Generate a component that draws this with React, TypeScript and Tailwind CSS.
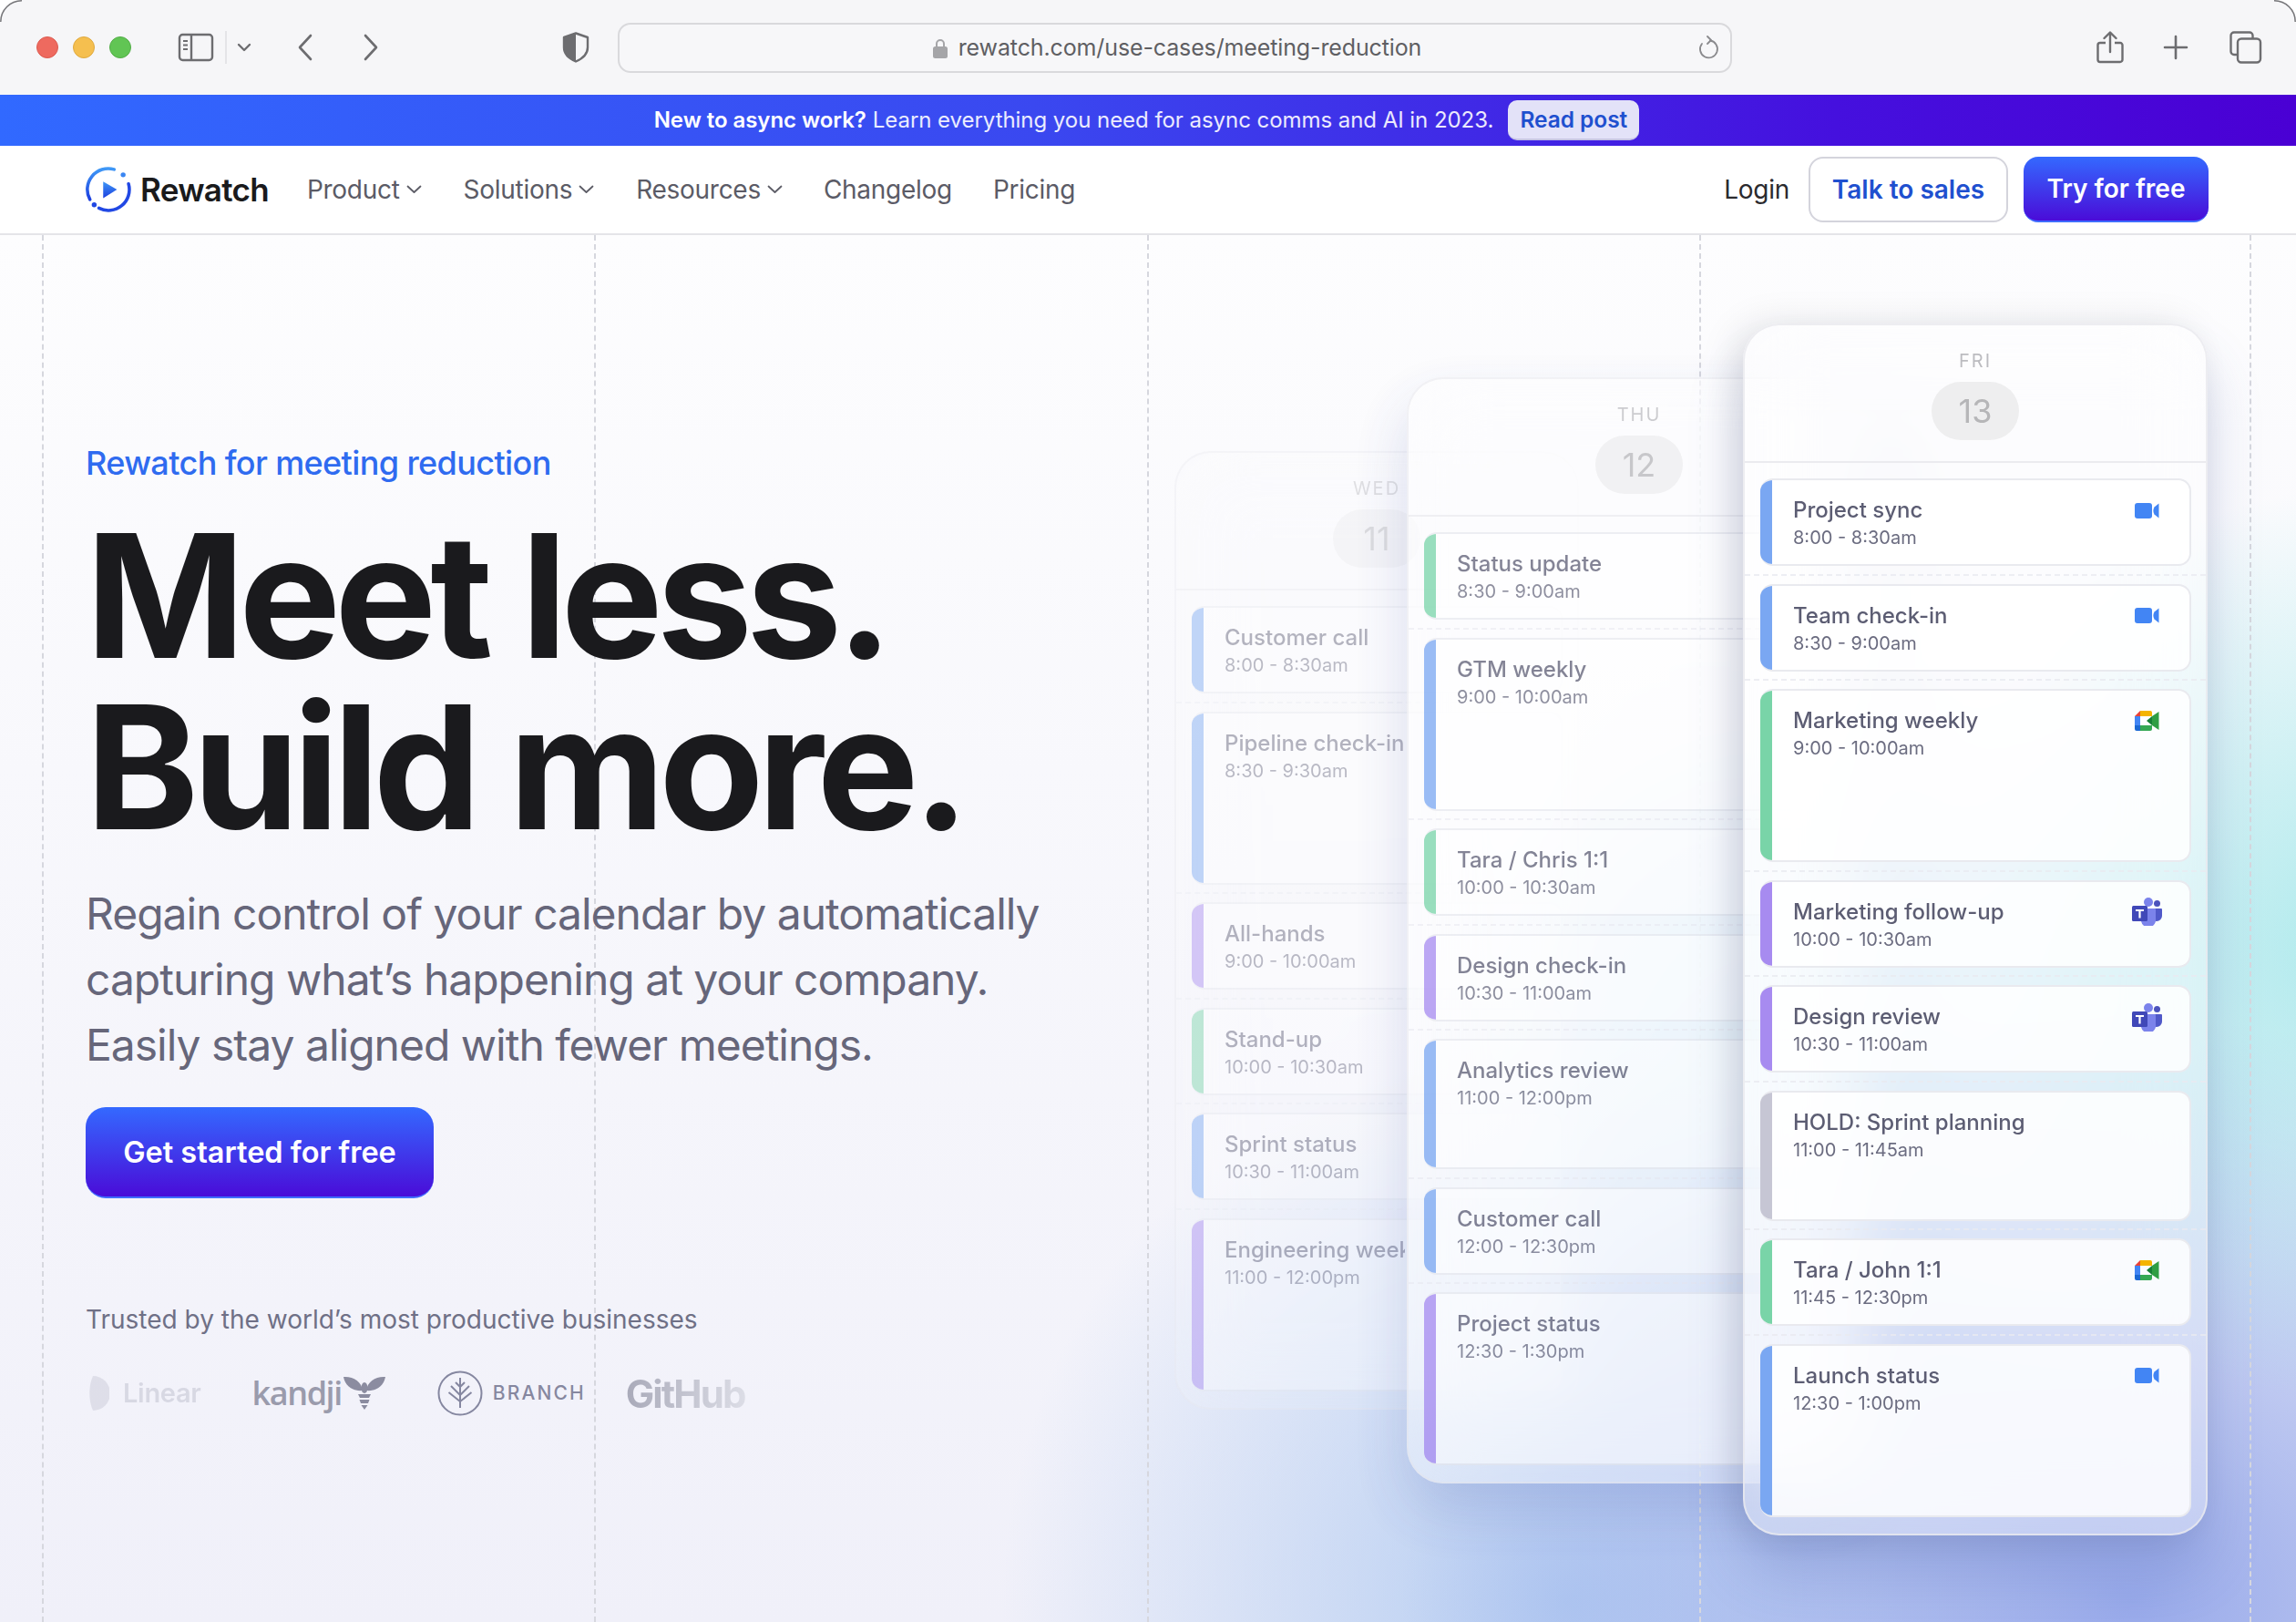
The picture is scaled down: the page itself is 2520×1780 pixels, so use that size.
import React from "react";

type Ev = { t: string; s: string; c: string; h: number; i?: "zoom" | "meet" | "teams" };

const BLUE = "bg-[#7aa7f2]";
const GREEN = "bg-[#79d4a8]";
const PURPLE = "bg-[#a78bf0]";
const GRAY = "bg-[#c6c6d4]";

const wed: Ev[] = [
  { t: "Customer call", s: "8:00 - 8:30am", c: BLUE, h: 96 },
  { t: "Pipeline check-in", s: "8:30 - 9:30am", c: BLUE, h: 190 },
  { t: "All-hands", s: "9:00 - 10:00am", c: PURPLE, h: 96 },
  { t: "Stand-up", s: "10:00 - 10:30am", c: GREEN, h: 96 },
  { t: "Sprint status", s: "10:30 - 11:00am", c: BLUE, h: 96 },
  { t: "Engineering weekly", s: "11:00 - 12:00pm", c: PURPLE, h: 190 },
];
const thu: Ev[] = [
  { t: "Status update", s: "8:30 - 9:00am", c: GREEN, h: 96 },
  { t: "GTM weekly", s: "9:00 - 10:00am", c: BLUE, h: 190 },
  { t: "Tara / Chris 1:1", s: "10:00 - 10:30am", c: GREEN, h: 96 },
  { t: "Design check-in", s: "10:30 - 11:00am", c: PURPLE, h: 96 },
  { t: "Analytics review", s: "11:00 - 12:00pm", c: BLUE, h: 143 },
  { t: "Customer call", s: "12:00 - 12:30pm", c: BLUE, h: 96 },
  { t: "Project status", s: "12:30 - 1:30pm", c: PURPLE, h: 190 },
];
const fri: Ev[] = [
  { t: "Project sync", s: "8:00 - 8:30am", c: BLUE, h: 96, i: "zoom" },
  { t: "Team check-in", s: "8:30 - 9:00am", c: BLUE, h: 96, i: "zoom" },
  { t: "Marketing weekly", s: "9:00 - 10:00am", c: GREEN, h: 190, i: "meet" },
  { t: "Marketing follow-up", s: "10:00 - 10:30am", c: PURPLE, h: 96, i: "teams" },
  { t: "Design review", s: "10:30 - 11:00am", c: PURPLE, h: 96, i: "teams" },
  { t: "HOLD: Sprint planning", s: "11:00 - 11:45am", c: GRAY, h: 143 },
  { t: "Tara / John 1:1", s: "11:45 - 12:30pm", c: GREEN, h: 96, i: "meet" },
  { t: "Launch status", s: "12:30 - 1:00pm", c: BLUE, h: 190, i: "zoom" },
];

function ZoomIcon() {
  return (
    <svg width="27" height="17" viewBox="0 0 27 17">
      <rect x="0" y="0" width="19" height="17" rx="3" fill="#4285f4" />
      <path d="M26.5 0.5V16.5L21.5 12.5C20 10 20 7 21.5 4.5Z" fill="#4285f4" />
    </svg>
  );
}

function MeetIcon() {
  return (
    <svg width="27" height="22" viewBox="0 0 27 22">
      <path d="M6 0H17A2 2 0 0 1 19 2V6H13V6H6Z" fill="#f4b400" />
      <path d="M6 0V6H0Z" fill="#ea4335" />
      <path d="M0 6H6V16H0Z" fill="#4285f4" />
      <path d="M0 16H6V22H2A2 2 0 0 1 0 20Z" fill="#1967d2" />
      <path d="M6 16H13V16H19V20A2 2 0 0 1 17 22H6Z" fill="#34a853" />
      <path d="M13 11L19 6V16Z" fill="#188038" />
      <path d="M19 6L26.5 1V21L19 16Z" fill="#2f9e44" />
    </svg>
  );
}

function TeamsIcon() {
  return (
    <svg width="33" height="31" viewBox="0 0 33 31">
      <circle cx="27.5" cy="6.5" r="3.5" fill="#4b53bc" />
      <path d="M23 12H32A1 1 0 0 1 33 13V20A6 6 0 0 1 27 26C24 26 23 25 23 25Z" fill="#5059c9" />
      <circle cx="18" cy="5" r="5" fill="#7b83eb" />
      <path d="M9 12H25A1 1 0 0 1 26 13V23A8 8 0 0 1 10 26Z" fill="#7b83eb" />
      <rect x="0" y="9" width="17" height="17" rx="1.5" fill="#4048b8" />
      <path d="M4 13H13V15H9.6V22.5H7.4V15H4Z" fill="#fff" />
    </svg>
  );
}

function Card({ e, clip }: { e: Ev; clip?: boolean }) {
  return (
    <div
      className="ml-[17px] mr-[16px] flex overflow-hidden rounded-[14px] border-2 border-l-0 border-[#e9eaef] bg-white/85"
      style={{ height: e.h }}
    >
      <div className={`w-[13px] flex-none ${e.c}`} />
      <div className="flex min-w-0 flex-1 justify-between pl-[23px] pr-[30px] pt-[17px]">
        <div className={`whitespace-nowrap ${clip ? "max-w-[198px] overflow-hidden" : ""}`}>
          <div className="text-[24px] font-medium leading-[31px] text-[#5c5d73]">{e.t}</div>
          <div className="text-[20px] leading-[30px] text-[#6b6c80]">{e.s}</div>
        </div>
        {e.i && (
          <div className="flex h-[32px] w-[33px] flex-none items-center justify-center">
            {e.i === "zoom" && <ZoomIcon />}
            {e.i === "meet" && <MeetIcon />}
            {e.i === "teams" && <TeamsIcon />}
          </div>
        )}
      </div>
    </div>
  );
}

function Panel({ day, num, ev, cls, clip }: { day: string; num: string; ev: Ev[]; cls: string; clip?: boolean }) {
  return (
    <div
      className={`flex-none overflow-hidden rounded-[40px] border-2 border-[#e8e9ee]/80 pb-[18px] backdrop-blur-[40px] ${cls}`}
    >
      <div className="flex h-[151px] flex-col items-center border-b-2 border-[#ebebef] pt-[26px]">
        <div className="text-[20px] leading-[26px] tracking-[0.1em] text-[#bcbcc0]">{day}</div>
        <div className="mt-[10px] flex h-[64px] w-[96px] items-center justify-center rounded-[32px] bg-[#eeeeef] text-[36px] text-[#b6b6b8]">
          {num}
        </div>
      </div>
      <div className="pt-[17px]">
        {ev.map((e, i) => (
          <div key={e.t}>
            {i > 0 && <div className="my-[8.75px] border-t-2 border-dashed border-[#e8eaf0]/80" />}
            <Card e={e} clip={clip} />
          </div>
        ))}
      </div>
    </div>
  );
}

function Chevron() {
  return (
    <svg width="17" height="10" viewBox="0 0 17 10" fill="none" className="ml-[7px]">
      <path d="M1.5 1.5L8.5 8L15.5 1.5" stroke="#5c5c66" strokeWidth="1.8" strokeLinecap="round" strokeLinejoin="round" />
    </svg>
  );
}

function NavItem({ label, cls }: { label: string; cls: string }) {
  return (
    <div className={`flex items-center ${cls}`}>
      <span>{label}</span>
      <Chevron />
    </div>
  );
}

export default function App() {
  return (
    <div className="relative h-[1780px] w-[2520px] overflow-hidden bg-white [font-family:Inter,sans-serif]">
      {/* Browser toolbar */}
      <div className="flex h-[104px] items-center rounded-t-[22px] bg-[#f6f6f8] text-[#6d6d70]">
        <div className="ml-[40px] flex gap-[16px]">
          <div className="h-[24px] w-[24px] rounded-full border border-[#dc5b50] bg-[#ee6a5f]" />
          <div className="h-[24px] w-[24px] rounded-full border border-[#dfa93f] bg-[#f5bf4f]" />
          <div className="h-[24px] w-[24px] rounded-full border border-[#52ad47] bg-[#61c554]" />
        </div>
        <svg width="40" height="32" viewBox="0 0 40 32" fill="none" className="ml-[51px]">
          <rect x="2" y="2" width="36" height="28" rx="3.5" stroke="#6d6d70" strokeWidth="2.4" />
          <path d="M15 2V30" stroke="#6d6d70" strokeWidth="2.4" />
          <path d="M6 9H11M6 13.5H11M6 18H11" stroke="#6d6d70" strokeWidth="1.8" />
        </svg>
        <div className="ml-[12px] h-[36px] w-[2px] bg-[#e4e4e7]" />
        <svg width="16" height="10" viewBox="0 0 16 10" fill="none" className="ml-[11px]">
          <path d="M2 2L8 8L14 2" stroke="#6d6d70" strokeWidth="2.4" strokeLinecap="round" strokeLinejoin="round" />
        </svg>
        <svg width="20" height="30" viewBox="0 0 20 30" fill="none" className="ml-[49px]">
          <path d="M16 2L4 15L16 28" stroke="#6d6d70" strokeWidth="2.6" strokeLinecap="round" strokeLinejoin="round" />
        </svg>
        <svg width="20" height="30" viewBox="0 0 20 30" fill="none" className="ml-[52px]">
          <path d="M4 2L16 15L4 28" stroke="#6d6d70" strokeWidth="2.6" strokeLinecap="round" strokeLinejoin="round" />
        </svg>
        <svg width="30" height="34" viewBox="0 0 30 34" fill="none" className="ml-[200px]">
          <path d="M15 1.5L28 6V17C28 24 22 29.5 15 32.5C8 29.5 2 24 2 17V6Z" fill="#f6f6f8" stroke="#6d6d70" strokeWidth="2.4" strokeLinejoin="round" />
          <path d="M15 1.5V32.5C8 29.5 2 24 2 17V6Z" fill="#6d6d70" />
        </svg>
        <div className="relative ml-[31px] flex h-[55px] w-[1223px] items-center justify-center rounded-[14px] border-2 border-[#d9d9dc] bg-[#f7f7f9] pl-[4px] pt-[2px] text-[25px] tracking-[-0.005em] text-[#5f5f63]">
          <svg width="18" height="24" viewBox="0 0 18 24" className="mr-[11px]">
            <path d="M5 11V7A4 4 0 0 1 13 7V11" fill="none" stroke="#a5a5a8" strokeWidth="2" />
            <rect x="1" y="10" width="16" height="13" rx="2.5" fill="#a5a5a8" />
          </svg>
          rewatch.com/use-cases/meeting-reduction
          <svg width="24" height="28" viewBox="0 0 24 28" fill="none" className="absolute right-[12px] top-[12px]">
            <path d="M14 5.5A9.5 9.5 0 1 1 5 9" stroke="#8a8a8d" strokeWidth="1.8" strokeLinecap="round" />
            <path d="M11 1L15 5L11 9" stroke="#8a8a8d" strokeWidth="1.8" strokeLinecap="round" strokeLinejoin="round" />
          </svg>
        </div>
        <svg width="30" height="36" viewBox="0 0 30 36" fill="none" className="ml-[400px]">
          <path d="M10 13H4A2.5 2.5 0 0 0 1.5 15.5V31.5A2.5 2.5 0 0 0 4 34H26A2.5 2.5 0 0 0 28.5 31.5V15.5A2.5 2.5 0 0 0 26 13H20" stroke="#6d6d70" strokeWidth="2.4" />
          <path d="M15 23V2M8.5 8L15 1.5L21.5 8" stroke="#6d6d70" strokeWidth="2.4" strokeLinecap="round" strokeLinejoin="round" />
        </svg>
        <svg width="28" height="28" viewBox="0 0 28 28" fill="none" className="ml-[43px]">
          <path d="M14 2V26M2 14H26" stroke="#6d6d70" strokeWidth="2.6" strokeLinecap="round" />
        </svg>
        <svg width="36" height="36" viewBox="0 0 36 36" fill="none" className="ml-[45px]">
          <path d="M8 26H5A3.5 3.5 0 0 1 1.5 22.5V5A3.5 3.5 0 0 1 5 1.5H22A3.5 3.5 0 0 1 25.5 5V8" stroke="#6d6d70" strokeWidth="2.4" />
          <rect x="9" y="8.5" width="25" height="26" rx="4" stroke="#6d6d70" strokeWidth="2.4" />
        </svg>
      </div>
      {/* Window corner arcs */}
      <svg width="24" height="24" viewBox="0 0 24 24" fill="none" className="absolute left-0 top-0">
        <path d="M0.8 24A23 23 0 0 1 24 0.8" stroke="#77777a" strokeWidth="1.5" />
      </svg>
      <svg width="24" height="24" viewBox="0 0 24 24" fill="none" className="absolute right-0 top-0">
        <path d="M0 0.8A23 23 0 0 1 23.2 24" stroke="#77777a" strokeWidth="1.5" />
      </svg>

      {/* Announcement banner */}
      <div className="flex h-[56px] items-center justify-center bg-[linear-gradient(90deg,#3169ff_0%,#3a48f0_45%,#4510de_80%,#4a00d4_100%)] pr-[3px] text-[24px] tracking-[-0.002em] text-white/90">
        <span className="font-semibold text-white">New to async work?</span>
        <span className="ml-[7px]">Learn everything you need for async comms and AI in 2023.</span>
        <div className="ml-[16px] flex h-[44px] w-[144px] items-center justify-center rounded-[10px] border-b-2 border-[#c6c4e4] bg-[#e3e2f8] text-[24.5px] font-semibold text-[#1f50cf]">
          Read post
        </div>
      </div>

      {/* Site nav */}
      <div className="flex h-[98px] items-center border-b-2 border-[#e4e4e8] bg-white pl-[94px] text-[28px] tracking-[-0.01em] text-[#5b5b66]">
        <svg width="50" height="50" viewBox="0 0 48 48" fill="none">
          <defs>
            <linearGradient id="lg" x1="0" y1="0" x2="0" y2="1">
              <stop offset="0" stopColor="#3f98f6" />
              <stop offset="1" stopColor="#1c3fe0" />
            </linearGradient>
          </defs>
          <path d="M4.5 34.5A22 22 0 0 1 30 2.8" stroke="url(#lg)" strokeWidth="3.4" strokeLinecap="round" />
          <path d="M45.2 18A22 22 0 0 1 14 43.6" stroke="#2148e4" strokeWidth="3.4" strokeLinecap="round" />
          <circle cx="39.5" cy="8.5" r="2.6" fill="#3a86f2" />
          <circle cx="9" cy="40" r="2.6" fill="#2148e4" />
          <path d="M18.5 15.5V33L33 24Z" fill="url(#lg)" />
        </svg>
        <span className="ml-[10px] text-[35px] font-semibold tracking-[-0.02em] text-[#1a1a1c]">Rewatch</span>
        <NavItem label="Product" cls="ml-[42px]" />
        <NavItem label="Solutions" cls="ml-[46px]" />
        <NavItem label="Resources" cls="ml-[46px]" />
        <span className="ml-[45px]">Changelog</span>
        <span className="ml-[45px]">Pricing</span>
        <span className="ml-auto text-[#2a2a2e]">Login</span>
        <div className="ml-[21px] flex h-[72px] w-[219px] items-center justify-center rounded-[16px] border-2 border-[#d4d4dc] bg-white font-semibold tracking-normal text-[#1f50cf]">
          Talk to sales
        </div>
        <div className="ml-[17px] mr-[96px] flex h-[72px] w-[203px] items-center justify-center rounded-[16px] border-b-2 border-[#3f6cff] bg-[linear-gradient(180deg,#3469ff_0%,#4a0cd8_100%)] font-semibold tracking-normal text-white">
          Try for free
        </div>
      </div>

      {/* Hero */}
      <div className="relative flex h-[1522px] bg-[radial-gradient(ellipse_400px_500px_at_2560px_780px,rgba(120,225,225,0.55),rgba(120,225,225,0)_100%),radial-gradient(ellipse_800px_640px_at_2340px_1500px,rgba(140,160,232,0.88),rgba(140,160,232,0)_100%),radial-gradient(ellipse_620px_620px_at_1720px_1500px,rgba(170,198,240,0.85),rgba(170,198,240,0)_100%),radial-gradient(ellipse_500px_400px_at_2050px_900px,rgba(190,228,245,0.6),rgba(190,228,245,0)_100%),linear-gradient(180deg,#fdfdfe_0%,#f0f0f9_100%)]">
        {/* Dashed column guides */}
        <div className="pointer-events-none absolute inset-y-0 left-[46px] grid w-[2425px] grid-cols-4">
          <div className="border-l-2 border-dashed border-[#d6d7de]" />
          <div className="border-l-2 border-dashed border-[#d6d7de]" />
          <div className="border-l-2 border-dashed border-[#d6d7de]" />
          <div className="border-x-2 border-dashed border-[#d6d7de]" />
        </div>

        <div className="relative w-[1289px] flex-none pl-[94px] pt-[225px]">
          <div className="text-[36px] font-medium leading-[50px] tracking-[-0.017em] text-[#2f6bf0]">
            Rewatch for meeting reduction
          </div>
          <h1 className="mt-[27px] text-[188px] font-bold leading-[188px] tracking-[-0.037em] text-[#1a1a1d]">
            Meet less.
            <br />
            Build more.
          </h1>
          <p className="mt-[31px] text-[48px] leading-[72px] tracking-[-0.021em] text-[#66667a]">
            Regain control of your calendar by automatically
            <br />
            capturing what’s happening at your company.
            <br />
            Easily stay aligned with fewer meetings.
          </p>
          <div className="mt-[32px] flex h-[100px] w-[382px] items-center justify-center rounded-[22px] border-b-2 border-[#3f6cff] bg-[linear-gradient(180deg,#3469ff_0%,#4a0cd8_100%)] pt-[2px] text-[32.5px] font-semibold text-white">
            Get started for free
          </div>
          <div className="mt-[113px] text-[28px] leading-[40px] text-[#6f7086]">
            Trusted by the world’s most productive businesses
          </div>
          <div className="mt-[31px] flex h-[60px] items-center">
            <div className="flex items-center opacity-25">
              <svg width="26" height="40" viewBox="0 0 26 40">
                <path d="M8 1A19 19 0 0 1 8 39C3 28 3 12 8 1Z" fill="#a5a6b8" />
              </svg>
              <span className="ml-[15px] text-[29px] font-semibold tracking-[-0.01em] text-[#8b8ca0]">Linear</span>
            </div>
            <span className="ml-[56px] text-[36px] font-semibold leading-none tracking-[-0.04em] text-[#9a9bac] [font-family:'Open_Sans',sans-serif]">
              kandji
            </span>
            <svg width="48" height="38" viewBox="0 0 48 38" className="ml-[1px]">
              <path d="M22 16C12 17 3 12 1 1C11 0 21 6 22 16Z" fill="#8b8ca0" />
              <path d="M26 16C36 17 45 12 47 1C37 0 27 6 26 16Z" fill="#8b8ca0" />
              <ellipse cx="24" cy="13" rx="3.5" ry="6" fill="#8b8ca0" />
              <path d="M17 20H31L29 24H19ZM18.5 26H29.5L28 30H20ZM20.5 32H27.5L24 37Z" fill="#8b8ca0" />
            </svg>
            <svg width="50" height="50" viewBox="0 0 50 50" fill="none" className="ml-[56px]">
              <circle cx="25" cy="25" r="23.5" stroke="#8587a0" strokeWidth="2" />
              <path d="M25 8V41M25 27L15 17M25 27L35 17M25 34L12.5 24M25 34L37.5 24M25 18L20 13M25 18L30 13" stroke="#8587a0" strokeWidth="2" />
            </svg>
            <span className="ml-[11px] text-[21px] font-medium tracking-[0.1em] text-[#86879f]">BRANCH</span>
            <span className="ml-[44px] bg-[linear-gradient(90deg,#a9aab9,#dcdde6)] bg-clip-text text-[42px] font-bold tracking-[-0.045em] text-transparent">
              GitHub
            </span>
          </div>
        </div>

        <div className="relative flex flex-1 items-start">
          <Panel day="WED" num="11" ev={wed} clip cls="mt-[237px] w-[444px] bg-white/35 opacity-45" />
          <Panel
            day="THU"
            num="12"
            ev={thu}
            cls="-ml-[189px] mt-[156px] w-[510px] bg-white/50 opacity-75 shadow-[0_30px_60px_rgba(70,90,170,0.25)]"
          />
          <Panel
            day="FRI"
            num="13"
            ev={fri}
            cls="-ml-[141px] mt-[97px] w-[510px] bg-white/35 shadow-[0_40px_60px_rgba(70,90,170,0.22),-10px_0_40px_rgba(0,0,0,0.1)]"
          />
        </div>
      </div>
    </div>
  );
}
